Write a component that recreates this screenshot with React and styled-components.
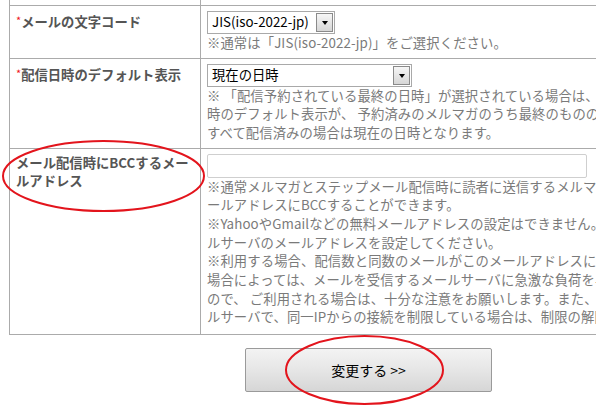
import React from "react";
import styled, { createGlobalStyle } from "styled-components";

const Global = createGlobalStyle`
  html, body { margin: 0; padding: 0; background: #fff; overflow: hidden; }
  body { font-family: "Noto Sans CJK JP", "Noto Sans", sans-serif; }
`;

const Page = styled.div`
  position: relative;
  width: 596px;
  height: 409px;
  overflow: hidden;
`;

const Wrap = styled.div`
  width: 719px;
  margin-left: 9px;
`;

const Table = styled.table`
  width: 100%;
  border-collapse: collapse;
  font-size: 13.33px;
  line-height: 18.67px;
`;

const Cell = styled.td`
  border: 1px solid #ababab;
  padding: 5px 6px;
  vertical-align: top;
  ${(p) => p.$last && "padding-bottom: 7px;"}
  ${(p) => p.$cut && "border-top: none; padding: 0; height: 5px;"}
`;

const LabelCell = styled(Cell)`
  width: 178px;
  font-weight: bold;
  color: #555;
`;

const Req = styled.span`
  color: #f0141e;
  font-weight: normal;
  font-size: 11px;
  vertical-align: 2px;
`;

const Note = styled.div`
  color: #7a7a7a;
  white-space: nowrap;
  letter-spacing: 0.1px;
`;

const Select = styled.div`
  display: flex;
  align-items: center;
  justify-content: space-between;
  box-sizing: border-box;
  width: ${(p) => p.$w}px;
  height: 23px;
  border: 1px solid #a9a9a9;
  background: #fff;
  color: #000;
  padding-left: 4px;
`;

const Arrow = styled.div`
  box-sizing: border-box;
  width: 17px;
  height: 19px;
  margin-right: 1px;
  border: 1px solid #8a8a8a;
  background: linear-gradient(#f6f6f6, #d6d6d6);
  display: flex;
  align-items: center;
  justify-content: center;
  &::after {
    content: "";
    border-left: 3.5px solid transparent;
    border-right: 3.5px solid transparent;
    border-top: 4px solid #000;
    margin-top: 1px;
  }
`;

const Input = styled.div`
  box-sizing: border-box;
  width: 380px;
  height: 24px;
  border: 1px solid #cfcfcf;
  border-radius: 2px;
  background: #fff;
`;

const ButtonRow = styled.div`
  display: flex;
  justify-content: center;
  padding-top: 13px;
`;

const Button = styled.button`
  box-sizing: border-box;
  width: 247px;
  height: 44px;
  border: 1px solid #9a9a9a;
  border-radius: 2px;
  background: linear-gradient(#f3f3f3, #e6e6e6 50%, #d6d6d6);
  font-family: inherit;
  font-size: 14px;
  color: #000;
  padding: 0;
`;

const Marks = styled.svg`
  position: absolute;
  left: 0;
  top: 0;
  pointer-events: none;
`;

export default function App() {
  return (
    <Page>
      <Global />
      <Wrap>
        <Table>
          <tbody>
            <tr>
              <LabelCell $cut />
              <Cell $cut />
            </tr>
            <tr>
              <LabelCell>
                <Req>*</Req>メールの文字コード
              </LabelCell>
              <Cell>
                <Select $w={128}>
                  JIS(iso-2022-jp)
                  <Arrow />
                </Select>
                <Note>※通常は「JIS(iso-2022-jp)」をご選択ください。</Note>
              </Cell>
            </tr>
            <tr>
              <LabelCell>
                <Req>*</Req>配信日時のデフォルト表示
              </LabelCell>
              <Cell>
                <Select $w={205}>
                  現在の日時
                  <Arrow />
                </Select>
                <Note>※ 「配信予約されている最終の日時」が選択されている場合は、メルマガ配信</Note>
                <Note>時のデフォルト表示が、 予約済みのメルマガのうち最終のものの配信日時、</Note>
                <Note>すべて配信済みの場合は現在の日時となります。</Note>
              </Cell>
            </tr>
            <tr>
              <LabelCell $last>メール配信時にBCCするメールアドレス</LabelCell>
              <Cell $last>
                <Input />
                <Note>※通常メルマガとステップメール配信時に読者に送信するメルマガと同じメ</Note>
                <Note>ールアドレスにBCCすることができます。</Note>
                <Note>※YahooやGmailなどの無料メールアドレスの設定はできません。お客様のメー</Note>
                <Note>ルサーバのメールアドレスを設定してください。</Note>
                <Note>※利用する場合、配信数と同数のメールがこのメールアドレスに届きます。</Note>
                <Note>場合によっては、メールを受信するメールサーバに急激な負荷を与える恐れ</Note>
                <Note>ので、 ご利用される場合は、十分な注意をお願いします。また、メー</Note>
                <Note>ルサーバで、同一IPからの接続を制限している場合は、制限の解除をお願い</Note>
              </Cell>
            </tr>
          </tbody>
        </Table>
        <ButtonRow>
          <Button>変更する &gt;&gt;</Button>
        </ButtonRow>
      </Wrap>
      <Marks width="596" height="409" viewBox="0 0 596 409">
        <ellipse cx="103.5" cy="176" rx="100.5" ry="35" fill="none" stroke="#e3141c" strokeWidth="2" />
        <ellipse cx="364.5" cy="370" rx="78.5" ry="34" fill="none" stroke="#e3141c" strokeWidth="2" />
      </Marks>
    </Page>
  );
}
